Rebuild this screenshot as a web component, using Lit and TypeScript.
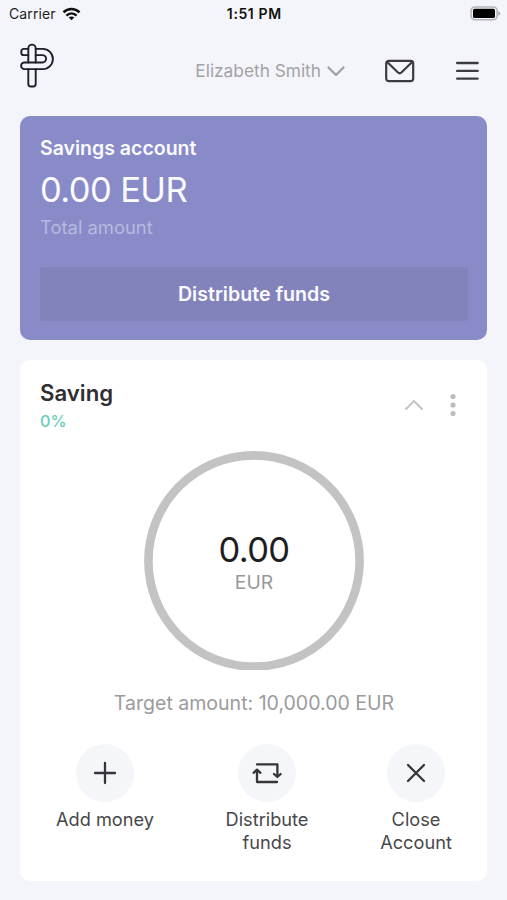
import { LitElement, html, css, svg } from "lit";
import { customElement } from "lit/decorators.js";

const actions = [
  {
    cls: "add",
    lines: ["Add money"],
    icon: svg`<path d="M29 19V39M19 29H39" />`,
  },
  {
    cls: "distribute",
    lines: ["Distribute", "funds"],
    icon: svg`<path d="M19 20.4H39.4V32.6M36 30L39.4 33L42.6 30M39 38H19V26M15.6 28.8L19 25.6L22.4 28.8" />`,
  },
  {
    cls: "close",
    lines: ["Close", "Account"],
    icon: svg`<path d="M21 21L37 37M37 21L21 37" />`,
  },
];

@customElement("app-root")
export class AppRoot extends LitElement {
  static styles = css`
    :host {
      display: block;
      box-sizing: border-box;
      width: 100%;
      height: 900px;
      overflow: hidden;
      background: #f4f5fa;
      font-family: Inter, "Liberation Sans", sans-serif;
      color: #2f2f33;
    }
    svg {
      display: block;
      fill: none;
      stroke-linecap: round;
      stroke-linejoin: round;
    }
    .status {
      display: grid;
      grid-template-columns: 1fr auto 1fr;
      align-items: center;
      height: 28px;
      padding: 0 6px 0 9px;
      font-size: 14px;
      line-height: 28px;
      color: #222226;
    }
    .carrier {
      display: flex;
      align-items: center;
      gap: 6px;
    }
    .carrier-name {
      letter-spacing: 0.1px;
    }
    .wifi {
      stroke-linecap: butt;
    }
    .time {
      font-weight: 600;
      font-size: 14px;
      letter-spacing: 0.6px;
      margin-right: 1.5px;
      color: #111;
    }
    .battery {
      justify-self: end;
    }
    .header {
      display: flex;
      align-items: center;
      height: 88px;
      padding: 0 27px 0 19px;
      box-sizing: border-box;
    }
    .logo {
      margin-bottom: 12px;
    }
    .user {
      display: flex;
      align-items: center;
      gap: 6px;
      margin-left: auto;
      font-size: 17.3px;
      line-height: 24px;
      color: #a3a3a6;
      white-space: nowrap;
    }
    .header .user,
    .header .mail,
    .header .menu {
      margin-bottom: 3px;
    }
    .mail {
      margin-left: 39px;
    }
    .menu {
      margin-left: 39px;
    }
    .balance {
      display: flex;
      flex-direction: column;
      box-sizing: border-box;
      height: 224px;
      margin: 0 20px;
      padding: 18px 19px 19px 20px;
      border-radius: 10px;
      background: #888bc8;
      color: #fafaff;
    }
    .title {
      font-size: 19.5px;
      font-weight: 600;
      line-height: 28px;
    }
    .amount {
      font-size: 34.5px;
      font-weight: 400;
      letter-spacing: -0.6px;
      line-height: 44px;
      margin-top: 6px;
    }
    .caption {
      font-size: 18.4px;
      line-height: 26px;
      margin-top: 2px;
      color: #b7b9df;
    }
    .cta {
      margin-top: auto;
      height: 54px;
      border-radius: 3px;
      background: #8283bb;
      font-size: 19.6px;
      font-weight: 600;
      line-height: 54px;
      text-align: center;
    }
    .goal {
      display: flex;
      flex-direction: column;
      box-sizing: border-box;
      height: 521px;
      margin: 20px 20px 0;
      padding: 18px 19px 0 20px;
      border-radius: 10px;
      background: #fff;
    }
    .goal-head {
      display: flex;
      justify-content: space-between;
      height: 73px;
    }
    .goal-name {
      font-size: 22.2px;
      font-weight: 600;
      line-height: 30px;
    }
    .percent {
      font-size: 16.2px;
      font-weight: 500;
      line-height: 27px;
      color: #6acdb8;
    }
    .controls {
      display: flex;
      align-items: center;
      gap: 24px;
      height: 54px;
      padding-right: 10px;
    }
    .dots {
      fill: #bdbdbf;
    }
    .ring {
      display: grid;
      align-self: center;
      width: 220px;
      height: 219px;
    }
    .ring > * {
      grid-area: 1 / 1;
    }
    .ring-text {
      display: flex;
      flex-direction: column;
      align-items: center;
      padding-top: 77px;
    }
    .ring-value {
      font-size: 34.5px;
      font-weight: 400;
      letter-spacing: -0.6px;
      line-height: 43px;
      color: #1e1e20;
    }
    .ring-unit {
      font-size: 19.3px;
      line-height: 22px;
      color: #98989a;
    }
    .target {
      margin: 19px -10px 0;
      font-size: 19.55px;
      line-height: 28px;
      text-align: center;
      color: #9b9b9d;
      white-space: nowrap;
    }
    .actions {
      display: flex;
      margin-top: 27px;
    }
    .action {
      display: flex;
      flex-direction: column;
      align-items: center;
      font-size: 18.2px;
      line-height: 22.5px;
      text-align: center;
      white-space: nowrap;
      color: #48484a;
    }
    .add {
      width: 130px;
    }
    .distribute {
      width: 194px;
    }
    .close {
      width: 104px;
    }
    .bubble {
      width: 58px;
      height: 58px;
      border-radius: 50%;
      background: #f4f6fa;
      margin-bottom: 6px;
    }
  `;

  render() {
    return html`
      <div class="status">
        <div class="carrier">
          <span class="carrier-name">Carrier</span>
          <svg class="wifi" width="19" height="14" viewBox="0 0 18 14" stroke="#111" stroke-width="2.5">
            <path d="M1 5.4C5.5 .9 12.5 .9 17 5.4M3.9 8.6C6.9 5.7 11.1 5.7 14.1 8.6" />
            <path d="M6.2 10.5C7.8 9 10.2 9 11.8 10.5L9 13.3Z" fill="#111" stroke="none" />
          </svg>
        </div>
        <span class="time">1:51 PM</span>
        <svg class="battery" width="31" height="16" viewBox="0 0 31 16">
          <rect x="1.1" y="1" width="26" height="12.8" rx="3.8" stroke="#b4b4b8" stroke-width="1.6" />
          <rect x="3" y="2.8" width="22" height="9.2" rx="1.6" fill="#000" />
          <path d="M28.4 5Q32 7.4 28.4 9.8Z" fill="#a0a0a4" />
        </svg>
      </div>

      <div class="header">
        <svg class="logo" width="37" height="46" viewBox="0 0 37 46" stroke="#1d1f2b" stroke-width="1.9">
          <path d="M9.3 19.5V5.3a3.6 3.6 0 0 1 7.4 0V19.5" />
          <path d="M9.3 5.9H4.7a2.4 2.4 0 0 0-2.4 2.4v1.4a2.4 2.4 0 0 0 2.4 2.4H9.3" />
          <path d="M16.7 5.9H23.8a10.1 10.1 0 0 1 0 20.2H5.4a3.3 3.3 0 0 1 0-6.6H23.4a3.6 3.6 0 0 0 0-7.4H16.7" />
          <path d="M9.3 26.1V41a2.5 2.5 0 0 0 2.5 2.5h2.4a2.5 2.5 0 0 0 2.5-2.5V26.1" />
        </svg>
        <div class="user">
          <span class="user-name">Elizabeth Smith</span>
          <svg width="18" height="12" viewBox="0 0 18 12" stroke="#a0a0a3" stroke-width="2.2">
            <path d="M1.5 2.5L9 10L16.5 2.5" />
          </svg>
        </div>
        <svg class="mail" width="31" height="24" viewBox="0 0 31 24" stroke="#3c3c40" stroke-width="2.2">
          <rect x="2.2" y="1.8" width="27" height="20.4" rx="2.6" />
          <path d="M3.2 3L14 13.5Q15.7 15 17.4 13.5L28.2 3" />
        </svg>
        <svg class="menu" width="26" height="20" viewBox="0 0 26 20" stroke="#3c3c40" stroke-width="2.4">
          <path d="M3.2 2H23.6M3.2 9.9H23.6M3.2 17.6H23.6" />
        </svg>
      </div>

      <section class="balance">
        <div class="title">Savings account</div>
        <div class="amount">0.00 EUR</div>
        <div class="caption">Total amount</div>
        <div class="cta">Distribute funds</div>
      </section>

      <section class="goal">
        <div class="goal-head">
          <div class="goal-label">
            <div class="goal-name">Saving</div>
            <div class="percent">0%</div>
          </div>
          <div class="controls">
            <svg width="20" height="12" viewBox="0 0 20 12" stroke="#c4c4c6" stroke-width="2">
              <path d="M2 10L10 2L18 10" />
            </svg>
            <svg class="dots" width="10" height="24" viewBox="0 0 10 24">
              <circle cx="5" cy="3.5" r="2.6" />
              <circle cx="5" cy="12" r="2.6" />
              <circle cx="5" cy="20.5" r="2.6" />
            </svg>
          </div>
        </div>
        <div class="ring">
          <svg width="220" height="219" viewBox="0 0 220 219" stroke="#c3c3c3" stroke-width="8.6">
            <circle cx="110" cy="110" r="105.6" />
          </svg>
          <div class="ring-text">
            <span class="ring-value">0.00</span>
            <span class="ring-unit">EUR</span>
          </div>
        </div>
        <div class="target">Target amount: 10,000.00 EUR</div>
        <div class="actions">
          ${actions.map(
            (a) => html`
              <div class="action ${a.cls}">
                <svg class="bubble" viewBox="0 0 58 58" stroke="#36363a" stroke-width="2.3">${a.icon}</svg>
                ${a.lines.map((l) => html`<span>${l}</span>`)}
              </div>
            `,
          )}
        </div>
      </section>
    `;
  }
}
